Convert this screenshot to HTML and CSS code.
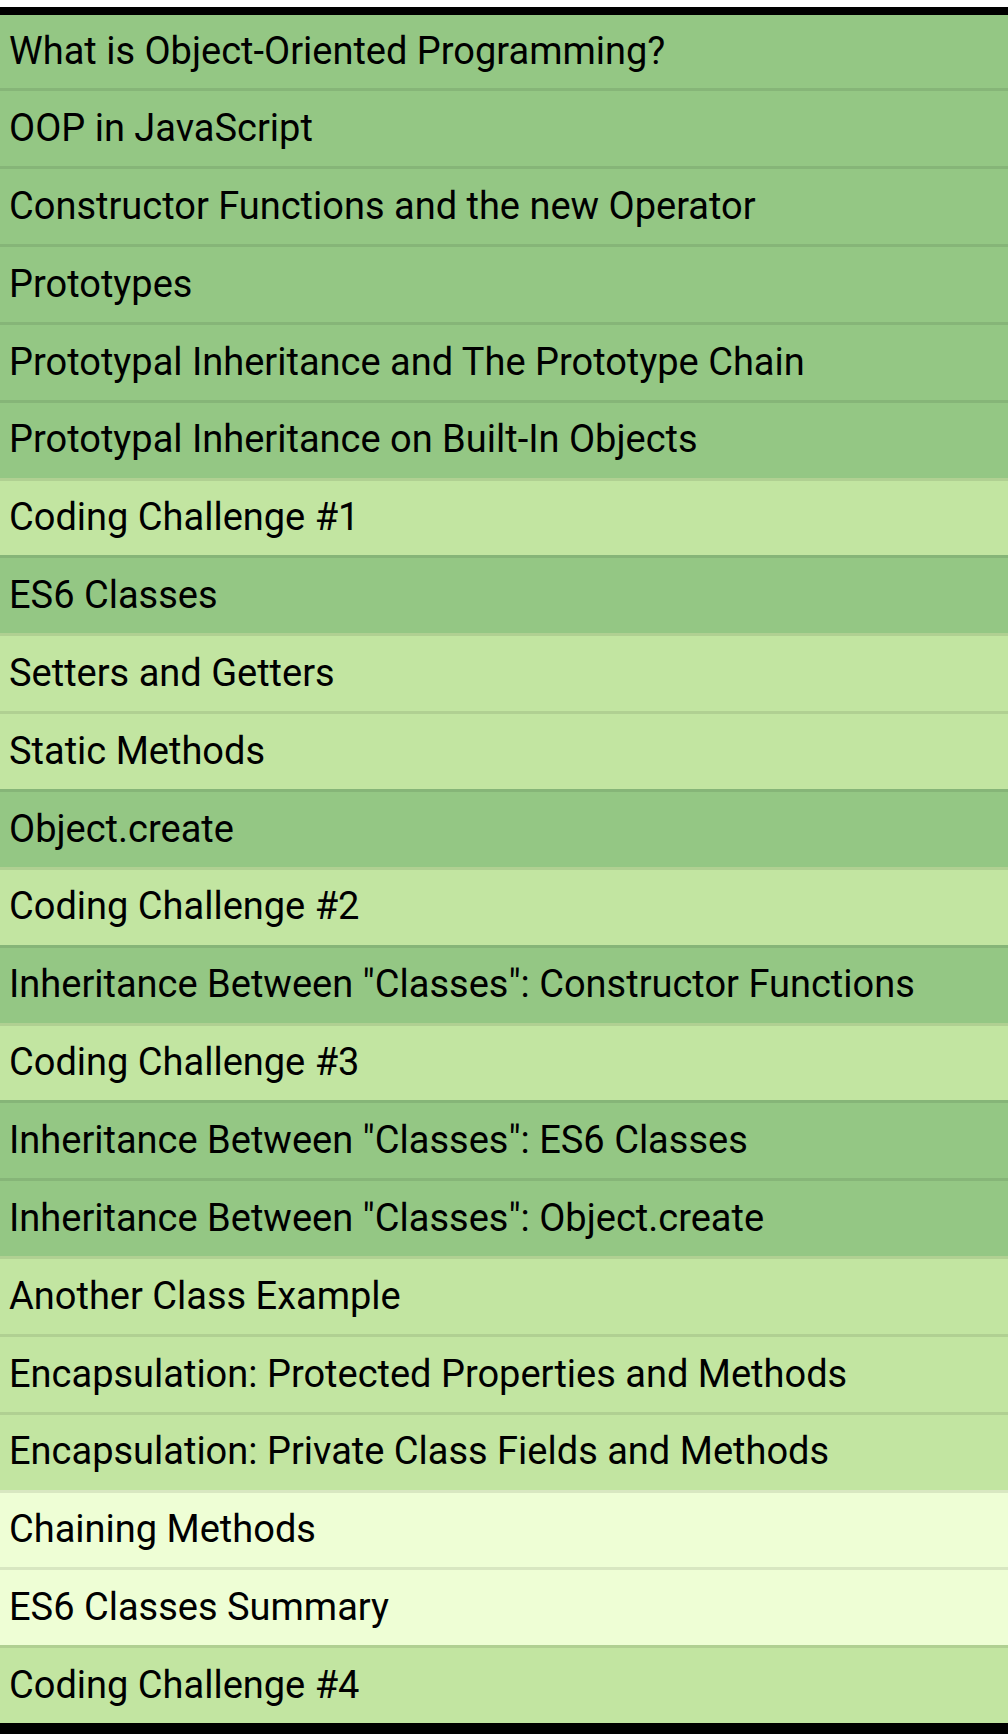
FILE: index.html
```html
<!DOCTYPE html>
<html lang="en">
<head>
<meta charset="utf-8">
<title>OOP Lectures</title>
<link rel="stylesheet" href="styles.css">
</head>
<body>
<ul class="list">
  <li class="row dark">What is Object-Oriented Programming?</li>
  <li class="row dark">OOP in JavaScript</li>
  <li class="row dark">Constructor Functions and the new Operator</li>
  <li class="row dark">Prototypes</li>
  <li class="row dark">Prototypal Inheritance and The Prototype Chain</li>
  <li class="row dark">Prototypal Inheritance on Built-In Objects</li>
  <li class="row light">Coding Challenge #1</li>
  <li class="row dark">ES6 Classes</li>
  <li class="row light">Setters and Getters</li>
  <li class="row light">Static Methods</li>
  <li class="row dark">Object.create</li>
  <li class="row light">Coding Challenge #2</li>
  <li class="row dark">Inheritance Between "Classes": Constructor Functions</li>
  <li class="row light">Coding Challenge #3</li>
  <li class="row dark">Inheritance Between "Classes": ES6 Classes</li>
  <li class="row dark">Inheritance Between "Classes": Object.create</li>
  <li class="row light">Another Class Example</li>
  <li class="row light">Encapsulation: Protected Properties and Methods</li>
  <li class="row light">Encapsulation: Private Class Fields and Methods</li>
  <li class="row pale">Chaining Methods</li>
  <li class="row pale">ES6 Classes Summary</li>
  <li class="row light">Coding Challenge #4</li>
</ul>
</body>
</html>
```

FILE: styles.css
```css
html, body {
  margin: 0;
  padding: 0;
  background: #ffffff;
}

body {
  padding-top: 7px;
  font-family: Roboto, "Noto Sans", "DejaVu Sans", sans-serif;
  color: #000000;
}

.list {
  list-style: none;
  margin: 0;
  padding: 0;
  border-top: 8px solid #000000;
  border-bottom: 12px solid #000000;
  display: flex;
  flex-direction: column;
}

.row {
  box-sizing: content-box;
  height: 74.85px;
  border-top: 3px solid rgba(0, 0, 0, 0.09);
  padding: 0 0 0 9px;
  display: flex;
  align-items: center;
  font-size: 38px;
  line-height: 1.2;
  white-space: nowrap;
}

.row:first-child {
  border-top: 0;
  height: 73.4px;
}

.dark {
  background: #94c784;
}

.light {
  background: #c2e5a1;
}

.pale {
  background: #eefed5;
}
```
